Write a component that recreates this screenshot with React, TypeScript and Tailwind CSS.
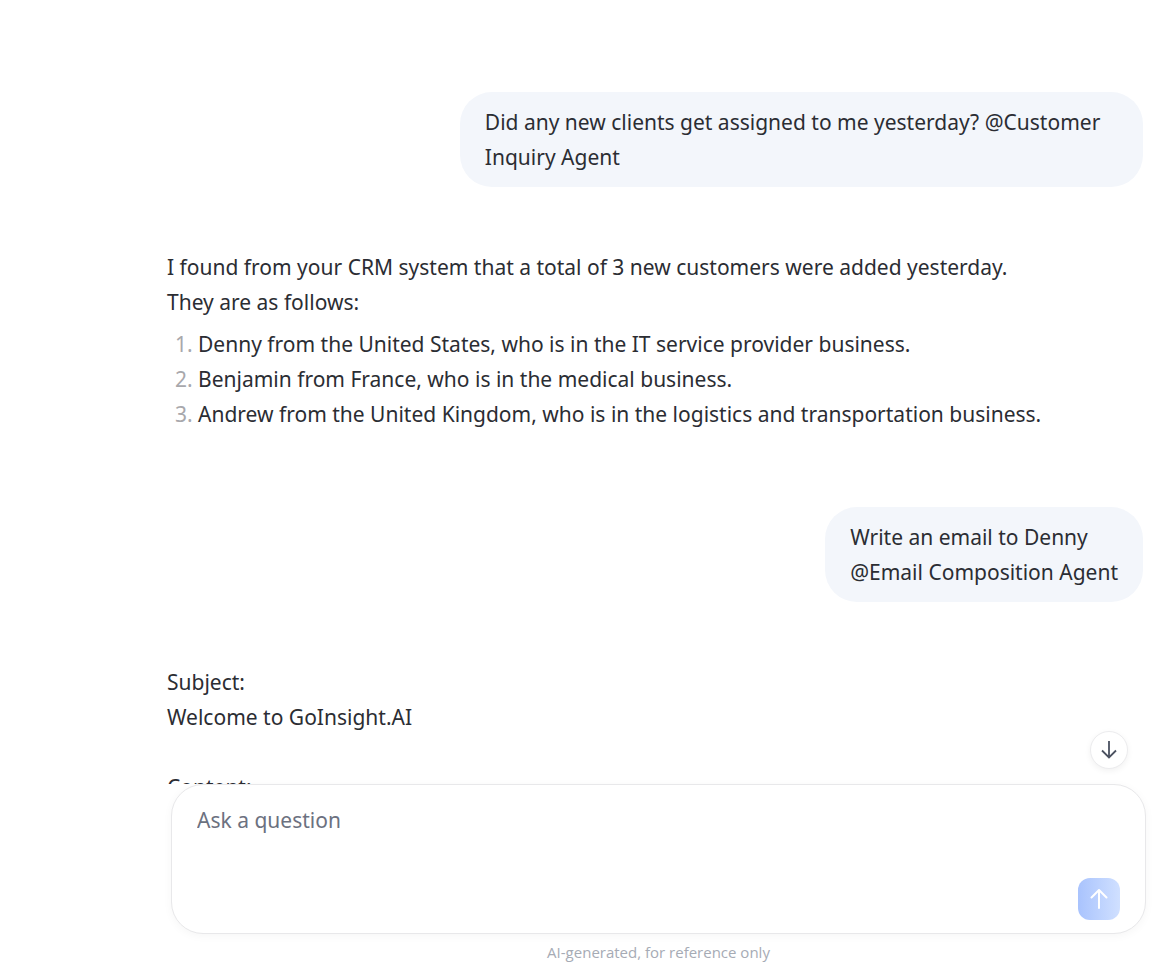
import { useState } from 'react';

type Message = {
  role: 'user' | 'agent';
  lines: string[];
  items?: string[];
};

const messages: Message[] = [
  {
    role: 'user',
    lines: ['Did any new clients get assigned to me yesterday? @Customer Inquiry Agent'],
  },
  {
    role: 'agent',
    lines: [
      'I found from your CRM system that a total of 3 new customers were added yesterday.',
      'They are as follows:',
    ],
    items: [
      'Denny from the United States, who is in the IT service provider business.',
      'Benjamin from France, who is in the medical business.',
      'Andrew from the United Kingdom, who is in the logistics and transportation business.',
    ],
  },
  {
    role: 'user',
    lines: ['Write an email to Denny', '@Email Composition Agent'],
  },
  {
    role: 'agent',
    lines: ['Subject:', 'Welcome to GoInsight.AI', '', 'Content:'],
  },
];

function UserMessage({ message }: { message: Message }) {
  return (
    <div className="flex justify-end pb-[63px]">
      <div className="max-w-[70%] rounded-[32px] bg-[#f3f6fb] px-[25px] pt-[13px] pb-3">
        {message.lines.map((line, i) => (
          <p key={i}>{line}</p>
        ))}
      </div>
    </div>
  );
}

function AgentMessage({ message }: { message: Message }) {
  return (
    <div className="pb-[75px]">
      {message.lines.map((line, i) => (
        <p key={i} className="min-h-[35px]">{line}</p>
      ))}
      {message.items && (
        <ol className="mt-[7px] list-decimal pl-[31px] marker:text-[#a8a8ac]">
          {message.items.map((item) => (
            <li key={item}>{item}</li>
          ))}
        </ol>
      )}
    </div>
  );
}

export default function App() {
  const [question, setQuestion] = useState('');

  return (
    <div className="flex h-screen flex-col bg-white font-['Noto_Sans','Open_Sans',sans-serif] text-[#2b2d33]">
      {/* Conversation */}
      <div className="relative min-h-0 flex-1">
        <main className="h-full overflow-y-auto pt-[92px] pr-7 pl-[167px] text-[21px] leading-[35px] [scrollbar-width:none]">
          {messages.map((message, i) =>
            message.role === 'user' ? (
              <UserMessage key={i} message={message} />
            ) : (
              <AgentMessage key={i} message={message} />
            )
          )}
        </main>
        <button
          type="button"
          aria-label="Scroll to bottom"
          className="absolute right-[43px] bottom-[15px] flex size-[38px] items-center justify-center rounded-full border border-[#ececee] bg-white text-[#4b5160] shadow-[0_2px_6px_rgba(0,0,0,0.06)]"
        >
          <svg width="18" height="20" viewBox="0 0 18 20" fill="none" stroke="currentColor" strokeWidth="1.8">
            <path d="M9 1v17M2 10.500l7 7 7-7" />
          </svg>
        </button>
      </div>

      {/* Composer */}
      <form
        onSubmit={(e) => e.preventDefault()}
        className="relative mr-[25px] ml-[171px] flex h-[150px] flex-col rounded-[32px] border border-[#e8e8ea] bg-white px-[25px] pt-[18px] pb-[13px] shadow-[0_2px_10px_rgba(0,0,0,0.04)]"
      >
        <textarea
          aria-label="Ask a question"
          placeholder="Ask a question"
          value={question}
          onChange={(e) => setQuestion(e.target.value)}
          className="min-h-0 w-full flex-1 resize-none bg-transparent text-[21px] leading-[35px] outline-none placeholder:text-[#6c7180]"
        />
        <button
          type="submit"
          aria-label="Send"
          className="flex size-[42px] shrink-0 items-center justify-center self-end rounded-xl bg-linear-to-r from-[#a9c3fd] to-[#d0e0ff] text-white"
        >
          <svg width="18" height="20" viewBox="0 0 18 20" fill="none" stroke="currentColor" strokeWidth="2" strokeLinecap="round" strokeLinejoin="round">
            <path d="M9 19V1M1.500 8.500L9 1l7.500 7.500" />
          </svg>
        </button>
      </form>
      <p className="mr-[25px] ml-[171px] h-[34px] pt-[6px] text-center font-['Open_Sans',sans-serif] text-[15px] leading-6 text-[#a6abb5]">
        AI-generated, for reference only
      </p>
    </div>
  );
}
